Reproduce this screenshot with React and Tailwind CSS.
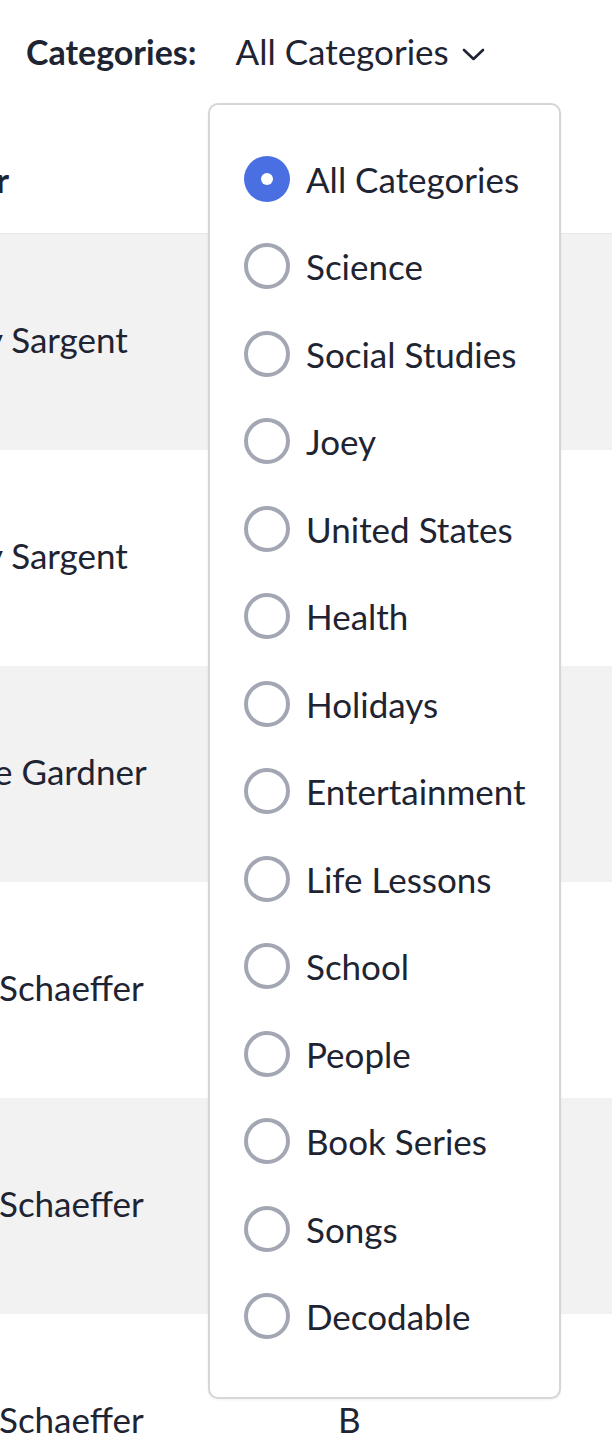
import React from "react";

const categories = [
  "All Categories",
  "Science",
  "Social Studies",
  "Joey",
  "United States",
  "Health",
  "Holidays",
  "Entertainment",
  "Life Lessons",
  "School",
  "People",
  "Book Series",
  "Songs",
  "Decodable",
];

const rows = [
  { name: "y Sargent", ml: "-ml-[15px]", bg: "bg-[#f2f2f2]", col2: "" },
  { name: "y Sargent", ml: "-ml-[15px]", bg: "bg-white", col2: "" },
  { name: "e Gardner", ml: "-ml-[6px]", bg: "bg-[#f2f2f2]", col2: "" },
  { name: "Schaeffer", ml: "-ml-[1px]", bg: "bg-white", col2: "" },
  { name: "Schaeffer", ml: "-ml-[1px]", bg: "bg-[#f2f2f2]", col2: "" },
  { name: "Schaeffer", ml: "-ml-[1px]", bg: "bg-white", col2: "B" },
];

export default function App() {
  return (
    <div className="relative w-[612px] h-[1436px] overflow-hidden bg-white text-[#1f2432] font-['Lato','Noto_Sans',sans-serif] text-[35px]">
      {/* Filter bar */}
      <div className="flex items-center h-[102px] pl-[26px]">
        <span className="font-bold text-[34px]">Categories:</span>
        <span className="ml-[39px]">All Categories</span>
        <svg
          className="ml-[12px] mt-[6px]"
          width="25"
          height="15"
          viewBox="0 0 25 15"
          fill="none"
          stroke="#1f2432"
          strokeWidth="2.6"
          strokeLinecap="round"
          strokeLinejoin="round"
        >
          <polyline points="3,3 12.5,12 22,3" />
        </svg>
      </div>

      {/* Table header */}
      <div className="flex h-[132px] pt-[22px] border-b border-[#e6e6e6]">
        <div className="w-[300px] h-[110px] flex items-center">
          <span className="font-bold -ml-[4px]">r</span>
        </div>
      </div>

      {/* Table rows */}
      {rows.map((r, i) => (
        <div key={i} className={`flex h-[216px] items-center pb-[6px] ${r.bg}`}>
          <div className="w-[300px] overflow-hidden whitespace-nowrap">
            <span className={`block ${r.ml}`}>{r.name}</span>
          </div>
          <div className="ml-[38px]">{r.col2}</div>
        </div>
      ))}

      {/* Dropdown */}
      <div className="absolute left-[208px] top-[103px] w-[353px] h-[1296px] bg-white border-2 border-[#d6d6d6] rounded-[10px] shadow-[0_1px_3px_rgba(0,0,0,0.06)] pt-[30px] pl-[34px]">
        {categories.map((c, i) => (
          <div key={c} className="flex items-center h-[87.5px]">
            {i === 0 ? (
              <span className="w-[46px] h-[46px] rounded-full bg-[#4a6fe3] flex items-center justify-center shrink-0">
                <span className="w-[12px] h-[12px] rounded-full bg-white" />
              </span>
            ) : (
              <span className="w-[46px] h-[46px] rounded-full border-[4px] border-[#a3a7b3] bg-white shrink-0" />
            )}
            <span className="ml-[16px] whitespace-nowrap">{c}</span>
          </div>
        ))}
      </div>
    </div>
  );
}
